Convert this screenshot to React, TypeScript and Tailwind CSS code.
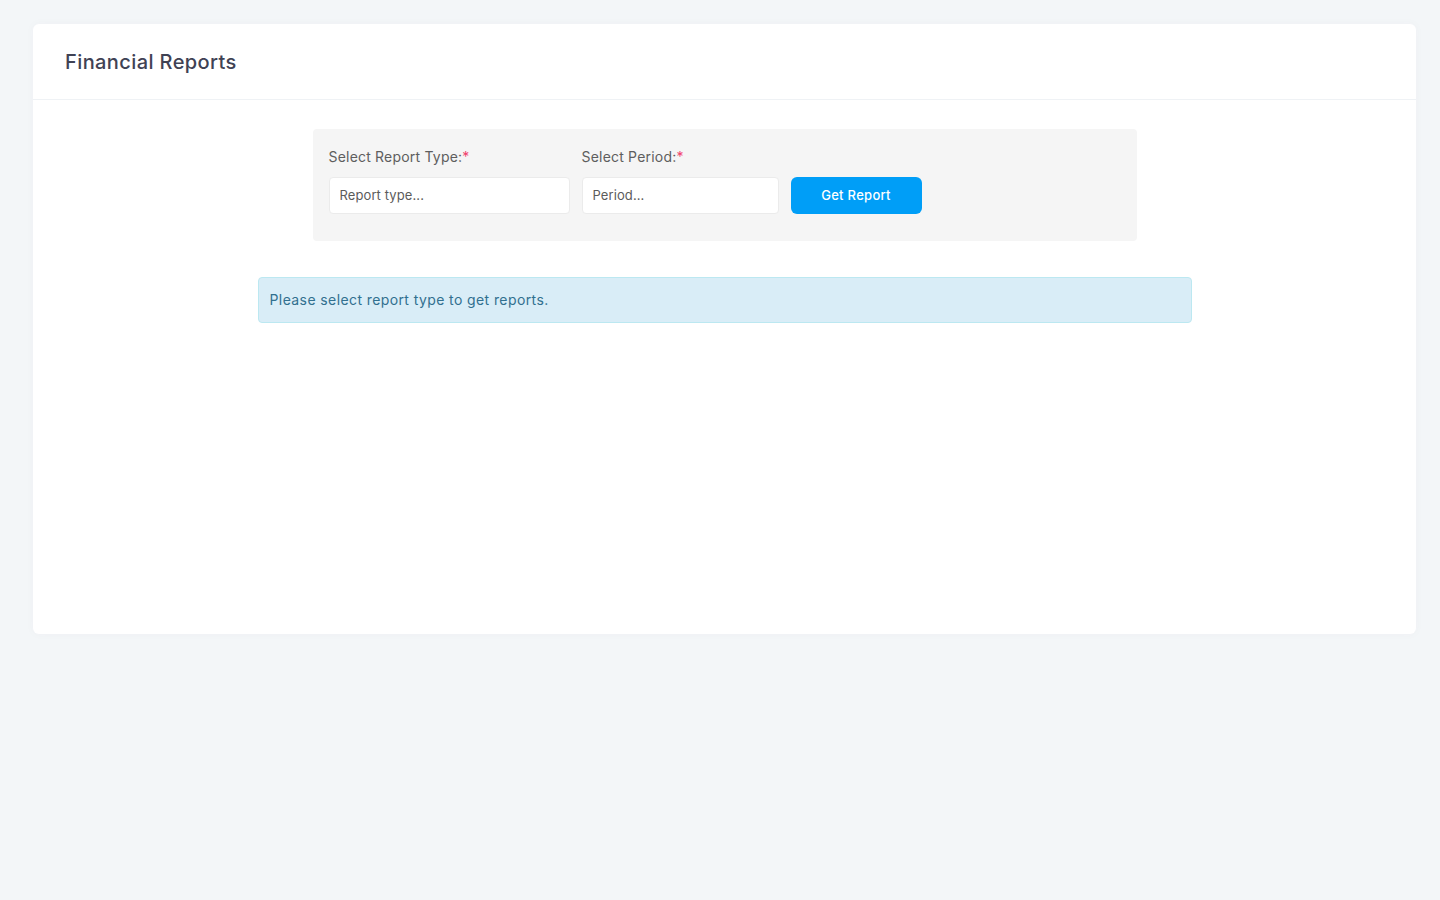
const FONT = { fontFamily: 'Inter, "Open Sans", sans-serif' }

function Field({ label, placeholder, width }: { label: string; placeholder: string; width: string }) {
  return (
    <div className="flex flex-col">
      <label className="mb-[10px] h-[20px] text-[14px] leading-[20px] tracking-[0.2px] text-[#5e5e5e]">
        {label}
        <span className="text-[#f1416c]">*</span>
      </label>
      <div
        className={`${width} flex h-[37px] items-center rounded-[4px] border border-[#ebebeb] bg-white px-[10px] text-[13px] tracking-[0.1px] text-[#5b5b5b]`}
      >
        {placeholder}
      </div>
    </div>
  )
}

export default function App() {
  return (
    <div className="min-h-[900px] bg-[#f3f6f8] pl-[33px] pr-[24px] pt-[24px]" style={FONT}>
      <div className="h-[610px] rounded-[6px] bg-white shadow-[0_0_10px_rgba(82,63,105,0.03)]">
        <div className="flex h-[76px] items-center border-b border-[#eff2f5] px-[32px]">
          <h1 className="text-[20px] font-medium tracking-[0.4px] text-[#3f4254]">Financial Reports</h1>
        </div>
        <div className="flex flex-col items-center pt-[29px]">
          <div className="flex h-[112px] w-[824px] items-start gap-[12px] rounded-[4px] bg-[#f5f5f5] px-[16px] pt-[18px]">
            <Field label="Select Report Type:" placeholder="Report type..." width="w-[241px]" />
            <Field label="Select Period:" placeholder="Period..." width="w-[197px]" />
            <button
              type="button"
              className="mt-[30px] h-[37px] w-[131px] rounded-[6px] bg-[#009ef7] text-[13px] font-medium tracking-[0.3px] text-white"
            >
              Get Report
            </button>
          </div>
          <div className="mt-[36px] flex h-[46px] w-[934px] items-center rounded-[4px] border border-[#bce8f1] bg-[#d9edf7] px-[11px] pb-[2px] text-[14px] tracking-[0.4px] text-[#31708f]">
            Please select report type to get reports.
          </div>
        </div>
      </div>
    </div>
  )
}
